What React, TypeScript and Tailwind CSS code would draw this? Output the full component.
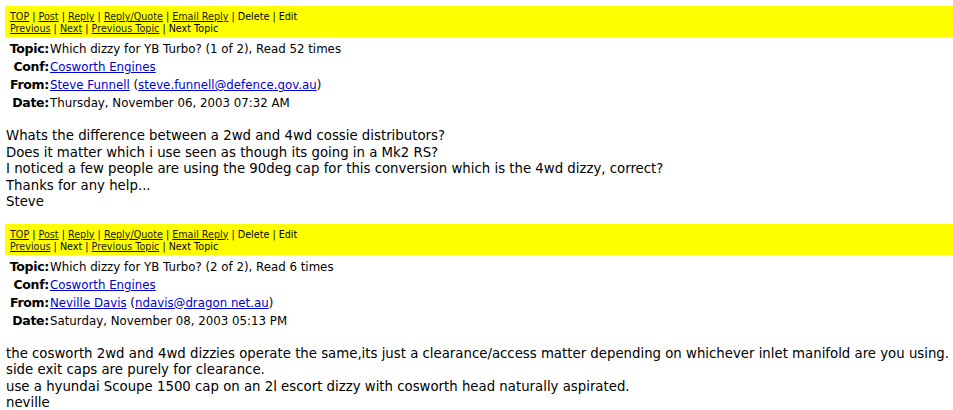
import React from 'react';

interface Post {
  topic: string;
  from: string;
  email: string;
  date: string;
  body: string[];
  nextLinked: boolean;
}

const posts: Post[] = [
  {
    topic: 'Which dizzy for YB Turbo? (1 of 2), Read 52 times',
    from: 'Steve Funnell',
    email: 'steve.funnell@defence.gov.au',
    date: 'Thursday, November 06, 2003 07:32 AM',
    nextLinked: true,
    body: [
      'Whats the difference between a 2wd and 4wd cossie distributors?',
      'Does it matter which i use seen as though its going in a Mk2 RS?',
      'I noticed a few people are using the 90deg cap for this conversion which is the 4wd dizzy, correct?',
      'Thanks for any help...',
      'Steve',
    ],
  },
  {
    topic: 'Which dizzy for YB Turbo? (2 of 2), Read 6 times',
    from: 'Neville Davis',
    email: 'ndavis@dragon net.au',
    date: 'Saturday, November 08, 2003 05:13 PM',
    nextLinked: false,
    body: [
      'the cosworth 2wd and 4wd dizzies operate the same,its just a clearance/access matter depending on whichever inlet manifold are you using.',
      'side exit caps are purely for clearance.',
      'use a hyundai Scoupe 1500 cap on an 2l escort dizzy with cosworth head naturally aspirated.',
      'neville',
    ],
  },
];

const NavLink: React.FC<{ children: React.ReactNode }> = ({ children }) => (
  <a href="#" className="underline text-[#1a1a00]">{children}</a>
);

const Sep = () => <span> | </span>;

const PostBlock: React.FC<{ post: Post }> = ({ post }) => (
  <div>
    {/* nav bar */}
    <div className="ml-[5px] h-[31px] bg-[#ffff00] pl-[5px] pt-[5px] text-[9.6px] leading-[12px] text-black">
      <div>
        <NavLink>TOP</NavLink><Sep /><NavLink>Post</NavLink><Sep /><NavLink>Reply</NavLink><Sep />
        <NavLink>Reply/Quote</NavLink><Sep /><NavLink>Email Reply</NavLink><Sep />Delete<Sep />Edit
      </div>
      <div>
        <NavLink>Previous</NavLink><Sep />
        {post.nextLinked ? <NavLink>Next</NavLink> : <span>Next</span>}
        <Sep /><NavLink>Previous Topic</NavLink><Sep />Next Topic
      </div>
    </div>

    {/* header */}
    <div className="mt-[3px] ml-[8px] grid grid-cols-[41px_1fr] gap-x-[1px] text-[11.8px] leading-[18px] text-black">
      <span className="text-right font-bold text-[12.5px] tracking-[-0.3px]">Topic:</span>
      <span>{post.topic}</span>
      <span className="text-right font-bold text-[12.5px] tracking-[-0.3px]">Conf:</span>
      <span><a href="#" className="underline text-[#0000cc]">Cosworth Engines</a></span>
      <span className="text-right font-bold text-[12.5px] tracking-[-0.3px]">From:</span>
      <span>
        <a href="#" className="underline text-[#0000cc]">{post.from}</a> (
        <a href="#" className="underline text-[#0000cc]">{post.email}</a>)
      </span>
      <span className="text-right font-bold text-[12.5px] tracking-[-0.3px]">Date:</span>
      <span>{post.date}</span>
    </div>

    {/* body */}
    <div className="mt-[16px] ml-[6px] text-[13.3px] leading-[16.5px] text-black whitespace-nowrap">
      {post.body.map((line, i) => (
        <div key={i}>{line}</div>
      ))}
    </div>
  </div>
);

export default function App() {
  return (
    <div className="w-[953px] h-[410px] overflow-hidden bg-white pt-[6px] font-['DejaVu_Sans',Verdana,sans-serif]">
      <PostBlock post={posts[0]} />
      <div className="h-[13px]" />
      <PostBlock post={posts[1]} />
    </div>
  );
}
